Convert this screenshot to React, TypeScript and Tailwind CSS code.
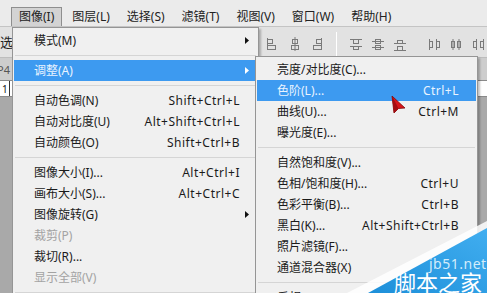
import React from "react";

type Item =
  | "sep"
  | {
      label: string;
      shortcut?: string;
      sub?: boolean;
      active?: boolean;
      disabled?: boolean;
    };

const imageMenu: Item[] = [
  { label: "模式(M)", sub: true },
  "sep",
  { label: "调整(A)", sub: true, active: true },
  "sep",
  { label: "自动色调(N)", shortcut: "Shift+Ctrl+L" },
  { label: "自动对比度(U)", shortcut: "Alt+Shift+Ctrl+L" },
  { label: "自动颜色(O)", shortcut: "Shift+Ctrl+B" },
  "sep",
  { label: "图像大小(I)...", shortcut: "Alt+Ctrl+I" },
  { label: "画布大小(S)...", shortcut: "Alt+Ctrl+C" },
  { label: "图像旋转(G)", sub: true },
  { label: "裁剪(P)", disabled: true },
  { label: "裁切(R)..." },
  { label: "显示全部(V)", disabled: true },
  "sep",
  { label: "复制(D)..." },
];

const adjustMenu: Item[] = [
  { label: "亮度/对比度(C)..." },
  { label: "色阶(L)...", shortcut: "Ctrl+L", active: true },
  { label: "曲线(U)...", shortcut: "Ctrl+M" },
  { label: "曝光度(E)..." },
  "sep",
  { label: "自然饱和度(V)..." },
  { label: "色相/饱和度(H)...", shortcut: "Ctrl+U" },
  { label: "色彩平衡(B)...", shortcut: "Ctrl+B" },
  { label: "黑白(K)...", shortcut: "Alt+Shift+Ctrl+B" },
  { label: "照片滤镜(F)..." },
  { label: "通道混合器(X)" },
  "sep",
  { label: "反相(I)", shortcut: "Ctrl+I" },
];

const menuBar = ["图像(I)", "图层(L)", "选择(S)", "滤镜(T)", "视图(V)", "窗口(W)", "帮助(H)"];

const Arrow = ({ light }: { light?: boolean }) => (
  <svg width="4" height="7" viewBox="0 0 4 7" className="absolute right-[8px] top-[7px]">
    <path d="M0 0 L4 3.5 L0 7 Z" fill={light ? "#ffffff" : "#111111"} />
  </svg>
);

const MenuRows = ({ items }: { items: Item[] }) => (
  <>
    {items.map((item, i) => {
      if (item === "sep") {
        return (
          <div key={i} className="h-[9px] flex items-center mx-[2px]">
            <div className="w-full h-px bg-[#d5d5d5]" />
          </div>
        );
      }
      const color = item.active
        ? "text-[#eaf4ff] bg-[#3d9af0]"
        : item.disabled
          ? "text-[#a3a3a3]"
          : "text-[#1b1b1b]";
      return (
        <div
          key={i}
          className={`relative h-[21px] mx-[1px] flex items-center justify-between pl-[20px] pr-[17px] ${color}`}
        >
          <span>{item.label}</span>
          {item.shortcut && <span className="tracking-[0.5px]">{item.shortcut}</span>}
          {item.sub && <Arrow light={item.active} />}
        </div>
      );
    })}
  </>
);

// small alignment glyphs in the options bar
const ToolIcon = ({ kind }: { kind: number }) => (
  <svg width="14" height="16" viewBox="0 0 14 16" stroke="#7a7a7a" fill="none" strokeWidth="1">
    {kind === 0 && (
      <>
        <rect x="3.5" y="6.5" width="6" height="5" />
        <path d="M1 13.5 H13" />
      </>
    )}
    {kind === 1 && (
      <>
        <path d="M1.5 2 V14" />
        <rect x="1.5" y="3.5" width="5" height="4" />
        <rect x="1.5" y="9.5" width="8" height="4" />
      </>
    )}
    {kind === 2 && (
      <>
        <path d="M7 1 V15" />
        <rect x="4.5" y="3.5" width="5" height="4" />
        <rect x="3.5" y="9.5" width="7" height="4" />
      </>
    )}
    {kind === 3 && (
      <>
        <path d="M11.5 2 V14" />
        <rect x="6.5" y="3.5" width="5" height="4" />
        <rect x="3.5" y="9.5" width="8" height="4" />
      </>
    )}
    {kind === 4 && (
      <>
        <path d="M1 3.5 H13 M1 10.5 H13" />
        <rect x="4.5" y="3.5" width="5" height="4" />
        <rect x="4.5" y="10.5" width="5" height="3" />
      </>
    )}
    {kind === 5 && (
      <>
        <path d="M1 5.5 H13 M1 11.5 H13" />
        <rect x="4.5" y="3.5" width="5" height="4" />
        <rect x="4.5" y="9.5" width="5" height="4" />
      </>
    )}
    {kind === 6 && (
      <>
        <path d="M1 7.5 H13 M1 14.5 H13" />
        <rect x="4.5" y="4.5" width="5" height="3" />
        <rect x="4.5" y="10.5" width="5" height="4" />
      </>
    )}
    {kind === 7 && (
      <>
        <path d="M2.5 3 V14 M9.5 3 V14" />
        <rect x="2.5" y="5.5" width="3" height="6" />
        <rect x="9.5" y="5.5" width="3" height="6" />
      </>
    )}
    {kind === 8 && (
      <>
        <path d="M4 3 V14 M10 3 V14" />
        <rect x="2.5" y="5.5" width="3" height="6" />
        <rect x="8.5" y="5.5" width="3" height="6" />
      </>
    )}
    {kind === 9 && (
      <>
        <path d="M5.5 3 V14 M12.5 3 V14" />
        <rect x="2.5" y="5.5" width="3" height="6" />
        <rect x="9.5" y="5.5" width="3" height="6" />
      </>
    )}
  </svg>
);

export default function App() {
  return (
    <div className="relative w-[487px] h-[293px] overflow-hidden bg-[#a9a9a9] text-[12px] leading-none font-['Noto_Sans','Noto_Sans_CJK_SC',sans-serif]">
      {/* menu bar */}
      <div className="h-[27px] bg-[#ebebeb] border-b border-[#c4c4c4] flex items-end pl-[11px] gap-[3px]">
        {menuBar.map((m, i) => (
          <div
            key={m}
            className={`h-[19px] px-[7px] flex items-center text-[#222] ${
              i === 0 ? "bg-[#d3d3d3] border border-b-0 border-[#8e8e8e]" : ""
            }`}
          >
            {m}
          </div>
        ))}
      </div>

      {/* options bar */}
      <div className="h-[31px] bg-[#e2e2e2] border-b border-[#bdbdbd] flex items-center">
        <span className="ml-[-26px] text-[13px] text-[#222] w-[60px] shrink-0">自动选择</span>
        <div className="ml-[198px] flex items-center gap-[8px] mt-[4px]">
          <ToolIcon kind={0} />
          <span className="w-[4px]" />
          <ToolIcon kind={1} />
          <ToolIcon kind={2} />
          <ToolIcon kind={3} />
          <div className="w-px h-[24px] bg-[#b2b2b2] border-r border-white mx-[4px]" />
          <ToolIcon kind={4} />
          <ToolIcon kind={5} />
          <ToolIcon kind={6} />
          <span className="w-[4px]" />
          <ToolIcon kind={7} />
          <ToolIcon kind={8} />
          <ToolIcon kind={9} />
        </div>
      </div>

      {/* document tab + ruler */}
      <div className="h-[22px] bg-[#cdcdcd] flex items-center">
        <span className="ml-[-3px] text-[11px] text-[#555]">P4</span>
      </div>
      <div className="h-[17px] bg-white border-y border-[#8a8a8a] flex items-center">
        <span className="ml-[2px] text-[10px] text-[#111]">1</span>
        <div className="ml-[1px] w-px h-full bg-[#333]" />
      </div>

      {/* image menu */}
      <div className="absolute left-[12px] top-[27px] w-[247px] bg-[#f0f0f0] border border-[#959595] pt-[2px] pb-[4px] shadow-[2px_2px_2px_rgba(0,0,0,0.25)]">
        <MenuRows items={imageMenu} />
      </div>

      {/* adjustments submenu */}
      <div className="absolute left-[255px] top-[56px] w-[223px] bg-[#f0f0f0] border border-[#959595] pt-[2px] pb-[4px] shadow-[2px_2px_2px_rgba(0,0,0,0.25)]">
        <MenuRows items={adjustMenu} />
      </div>

      {/* cursor */}
      <svg className="absolute left-[390px] top-[95px]" width="18" height="20" viewBox="0 0 18 20">
        <path d="M2 1 L15 13 L8.5 13.5 L4 18 Z" fill="#d8141a" stroke="#7a0a0a" strokeWidth="0.8" />
        <path d="M2 1 L8.5 13.5 L4 18 Z" fill="#a30d12" />
      </svg>

      {/* watermark */}
      <svg className="absolute left-[300px] top-[210px]" width="187" height="83" viewBox="0 0 187 83">
        <defs>
          <linearGradient id="wm" x1="0" y1="1" x2="1" y2="0">
            <stop offset="0" stopColor="#1d8fd9" />
            <stop offset="1" stopColor="#41aef0" />
          </linearGradient>
        </defs>
        <polygon points="47,83 187,11 187,83" fill="#ffffff" fillOpacity="0.85" />
        <polygon points="68,83 187,18 187,83" fill="url(#wm)" />
      </svg>
      <div className="absolute left-[429px] top-[257px] text-[14px] tracking-[0.5px] text-[#d2ecfb]">
        jb51.net
      </div>
      <div className="absolute left-[394px] top-[271px] text-[22px] text-white whitespace-nowrap">
        脚本之家
      </div>
    </div>
  );
}
